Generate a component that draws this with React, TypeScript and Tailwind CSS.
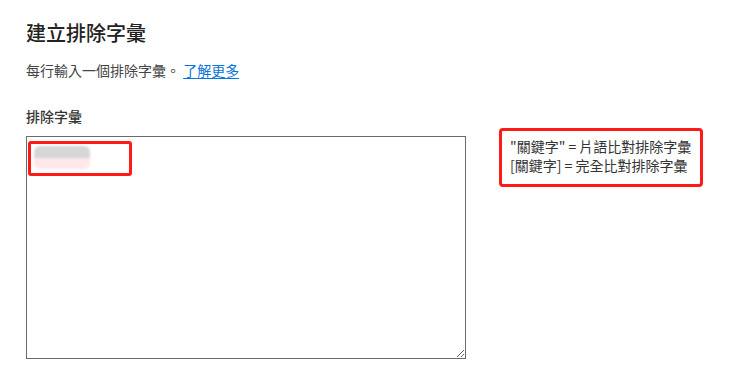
import React from 'react'

const font = { fontFamily: '"Noto Sans CJK TC", "Noto Sans", sans-serif' }

export default function App() {
  return (
    <div className="min-h-screen w-full bg-white pl-[26px] pt-[18px] text-[#333]" style={font}>
      {/* Header */}
      <h1 className="text-[20px] leading-[30px] font-medium text-[#222]">建立排除字彙</h1>
      <p className="mt-[12px] text-[14px] leading-[20px] text-[#444]">
        每行輸入一個排除字彙。{' '}
        <a href="#" className="text-[#0a74da] underline underline-offset-2">
          了解更多
        </a>
      </p>

      {/* Form row */}
      <div className="mt-[26px] flex gap-[33px]">
        <div className="flex w-[440px] flex-col">
          <label className="text-[14px] leading-[20px] font-medium text-[#333]">排除字彙</label>
          <div className="relative mt-[10px]">
            <textarea className="block h-[223px] w-[440px] resize border border-[#6b6b6b] bg-white outline-none" />
            {/* highlighted, blurred entry */}
            <div className="absolute left-[2px] top-[5px] h-[35px] w-[104px] rounded-[3px] border-[3px] border-[#ff1a1a]">
              <div className="ml-[3px] mt-[2px] h-[23px] w-[56px] overflow-hidden rounded-[6px] blur-[1px]">
                <div className="h-1/2 bg-[#d6d6d6]" />
                <div className="h-1/2 bg-[#fde9e9]" />
              </div>
            </div>
          </div>
        </div>

        <div className="mt-[22px] h-[59px] w-[204px] rounded-[4px] border-[3px] border-[#ff1a1a] px-[8px] pt-[6px] text-[14px] leading-[19px] text-[#333]">
          <div>"關鍵字" = 片語比對排除字彙</div>
          <div>[關鍵字] = 完全比對排除字彙</div>
        </div>
      </div>
    </div>
  )
}
